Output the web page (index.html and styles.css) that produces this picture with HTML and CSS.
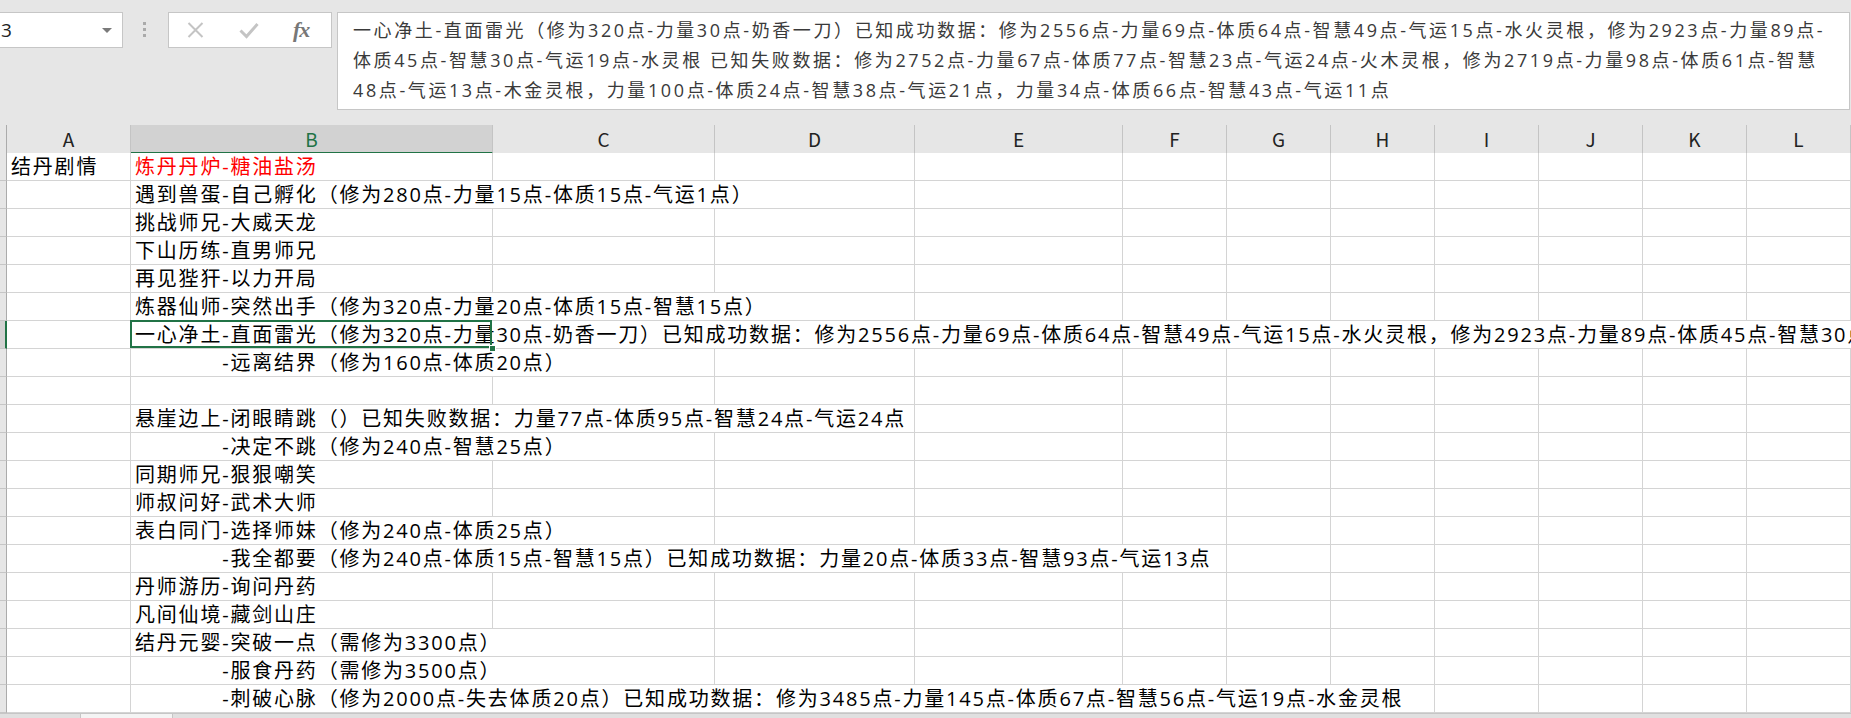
FILE: index.html
```html
<!DOCTYPE html>
<html lang="zh-CN">

<head>
	<meta charset="UTF-8">
	<link rel="stylesheet" href="styles.css">
</head>

<body>

	<div class="toolbar">
		<div class="namebox">
			<span class="ref">3</span>
			<span class="caret"></span>
		</div>
		<div class="grip"><i></i><i></i><i></i></div>
		<div class="actions">
			<svg width="17" height="16" viewBox="0 0 17 16">
				<path d="M1.5 1L15.5 15M15.5 1L1.5 15" stroke="#c4c4c4" stroke-width="2" fill="none" />
			</svg>
			<svg width="20" height="17" viewBox="0 0 20 17">
				<path d="M1.5 8.5L7.5 14.5L18.5 2" stroke="#c4c4c4" stroke-width="3" fill="none" />
			</svg>
			<span class="fx">fx</span>
		</div>
		<div class="formula">
			一心净土-直面雷光（修为320点-力量30点-奶香一刀）已知成功数据：修为2556点-力量69点-体质64点-智慧49点-气运15点-水火灵根，修为2923点-力量89点-<br>
			体质45点-智慧30点-气运19点-水灵根 已知失败数据：修为2752点-力量67点-体质77点-智慧23点-气运24点-火木灵根，修为2719点-力量98点-体质61点-智慧<br>
			48点-气运13点-木金灵根，力量100点-体质24点-智慧38点-气运21点，力量34点-体质66点-智慧43点-气运11点
		</div>
	</div>

	<div class="sheet" id="sheet">
		<div class="row head">
			<div class="rh"></div>
			<div class="ch">A</div>
			<div class="ch sel">B</div>
			<div class="ch">C</div>
			<div class="ch">D</div>
			<div class="ch">E</div>
			<div class="ch">F</div>
			<div class="ch">G</div>
			<div class="ch">H</div>
			<div class="ch">I</div>
			<div class="ch">J</div>
			<div class="ch">K</div>
			<div class="ch">L</div>
		</div>
	</div>

	<div class="tabs"><span class="tab"></span></div>

	<script>
		// [column A, column B, extra class for B]
		const rows = [
			['结丹剧情', '炼丹丹炉-糖油盐汤', 'red'],
			['', '遇到兽蛋-自己孵化（修为280点-力量15点-体质15点-气运1点）'],
			['', '挑战师兄-大威天龙'],
			['', '下山历练-直男师兄'],
			['', '再见狴犴-以力开局'],
			['', '炼器仙师-突然出手（修为320点-力量20点-体质15点-智慧15点）'],
			['', '一心净土-直面雷光（修为320点-力量30点-奶香一刀）已知成功数据：修为2556点-力量69点-体质64点-智慧49点-气运15点-水火灵根，修为2923点-力量89点-体质45点-智慧30点-气运19点-水灵根 已知失败数据：修为2752点-力量67点-体质77点-智慧23点-气运24点-火木灵根，修为2719点-力量98点-体质61点-智慧48点-气运13点-木金灵根，力量100点-体质24点-智慧38点-气运21点，力量34点-体质66点-智慧43点-气运11点'],
			['', '　　　　-远离结界（修为160点-体质20点）'],
			['', ''],
			['', '悬崖边上-闭眼睛跳（）已知失败数据：力量77点-体质95点-智慧24点-气运24点'],
			['', '　　　　-决定不跳（修为240点-智慧25点）'],
			['', '同期师兄-狠狠嘲笑'],
			['', '师叔问好-武术大师'],
			['', '表白同门-选择师妹（修为240点-体质25点）'],
			['', '　　　　-我全都要（修为240点-体质15点-智慧15点）已知成功数据：力量20点-体质33点-智慧93点-气运13点'],
			['', '丹师游历-询问丹药'],
			['', '凡间仙境-藏剑山庄'],
			['', '结丹元婴-突破一点（需修为3300点）'],
			['', '　　　　-服食丹药（需修为3500点）'],
			['', '　　　　-刺破心脉（修为2000点-失去体质20点）已知成功数据：修为3485点-力量145点-体质67点-智慧56点-气运19点-水金灵根']
		];
		const activeRow = 6;

		function cell(text, cls) {
			const inner = text ? '<span class="v' + (cls ? ' ' + cls : '') + '">' + text + '</span>' : '';
			return inner;
		}

		const sheet = document.getElementById('sheet');
		rows.forEach(function (r, i) {
			const row = document.createElement('div');
			row.className = 'row';
			let html = '<div class="rh' + (i === activeRow ? ' cur' : '') + '"></div>';
			html += '<div class="c">' + cell(r[0]) + '</div>';
			html += '<div class="c' + (i === activeRow ? ' active' : '') + '">' + cell(r[1], r[2]) + '</div>';
			for (let j = 0; j < 10; j++) html += '<div class="c"></div>';
			row.innerHTML = html;
			sheet.appendChild(row);
		});
	</script>
</body>

</html>
```

FILE: styles.css
```css
body {
	margin: 0;
	width: 1851px;
	height: 718px;
	overflow: hidden;
	background: #e6e6e6;
	font-family: "Open Sans", "Noto Sans CJK SC", sans-serif;
}

/* name box + formula bar */
.toolbar {
	display: flex;
	align-items: flex-start;
	height: 125px;
	padding-top: 12px;
	box-sizing: border-box;
}

.namebox {
	width: 123px;
	height: 36px;
	box-sizing: border-box;
	display: flex;
	align-items: center;
	justify-content: space-between;
	padding: 0 10px 0 1px;
	background: #fff;
	border: 1px solid #c6c6c6;
	border-left: none;
}

.ref {
	font-size: 19px;
	color: #222;
}

.caret {
	border: 5px solid transparent;
	border-top: 5px solid #7a7a7a;
	border-bottom: none;
}

.grip {
	display: flex;
	flex-direction: column;
	gap: 3px;
	margin: 10px 0 0 20px;
}

.grip i {
	width: 3px;
	height: 3px;
	background: #aaa;
}

.actions {
	width: 164px;
	height: 36px;
	box-sizing: border-box;
	margin-left: 22px;
	display: flex;
	align-items: center;
	gap: 35px;
	padding-left: 18px;
	background: #fff;
	border: 1px solid #c6c6c6;
}

.fx {
	font-family: "Liberation Serif", serif;
	font-style: italic;
	font-weight: bold;
	font-size: 22px;
	letter-spacing: -1px;
	color: #777;
	margin-left: -1px;
}

.formula {
	flex: 1;
	height: 98px;
	box-sizing: border-box;
	margin: 0 1px 0 5px;
	padding: 2px 0 0 15px;
	background: #fff;
	border: 1px solid #c6c6c6;
	font-size: 18px;
	line-height: 30px;
	letter-spacing: 2.6px;
	color: #3a3a3a;
	white-space: nowrap;
	overflow: hidden;
}

/* grid */
.row {
	display: grid;
	grid-template-columns: 7px 124px 362px 222px 200px 208px repeat(7, 104px);
	height: 28px;
}

.row > div {
	box-sizing: border-box;
}

.rh {
	background: #e6e6e6;
	border-right: 1px solid #ababab;
	border-bottom: 1px solid #c6c6c6;
}

.rh.cur {
	background: #d2d2d2;
	border-right: 2px solid #217346;
}

.head .rh {
	border-bottom: 1px solid #9e9e9e;
}

.ch {
	background: #e6e6e6;
	border-right: 1px solid #c4c4c4;
	border-bottom: 1px solid #9e9e9e;
	text-align: center;
	font-family: "Noto Sans CJK SC", sans-serif;
	font-size: 19px;
	line-height: 27px;
	color: #222;
}

.ch.sel {
	background: #d2d2d2;
	color: #217346;
	border-bottom: 2px solid #217346;
}

.c {
	background: #fff;
	border-right: 1px solid #d4d4d4;
	border-bottom: 1px solid #d4d4d4;
	padding-left: 4px;
	font-size: 20px;
	line-height: 27px;
	letter-spacing: 1.8px;
	color: #000;
	white-space: nowrap;
}

/* text spilling into the empty cells to the right hides their gridlines */
.c .v {
	display: inline-block;
	position: relative;
	z-index: 1;
	height: 27px;
	background: #fff;
}

.c .red {
	color: #ff0000;
}

.c.active {
	position: relative;
}

.c.active::after {
	content: "";
	position: absolute;
	top: -1px;
	left: -1px;
	right: 0;
	bottom: 0;
	border: 2px solid #217346;
	z-index: 2;
}

.c.active::before {
	content: "";
	position: absolute;
	right: -4px;
	bottom: -4px;
	width: 5px;
	height: 5px;
	background: #217346;
	border: 1px solid #fff;
	z-index: 3;
}

/* sheet tab strip peeking in at the bottom */
.tabs {
	height: 5px;
	border-top: 1px solid #c6c6c6;
	background: #e0e0e0;
}

.tab {
	display: block;
	margin-left: 80px;
	width: 91px;
	height: 5px;
	background: #f4f4f4;
	border-left: 1px solid #c6c6c6;
	border-right: 1px solid #c6c6c6;
}
```
